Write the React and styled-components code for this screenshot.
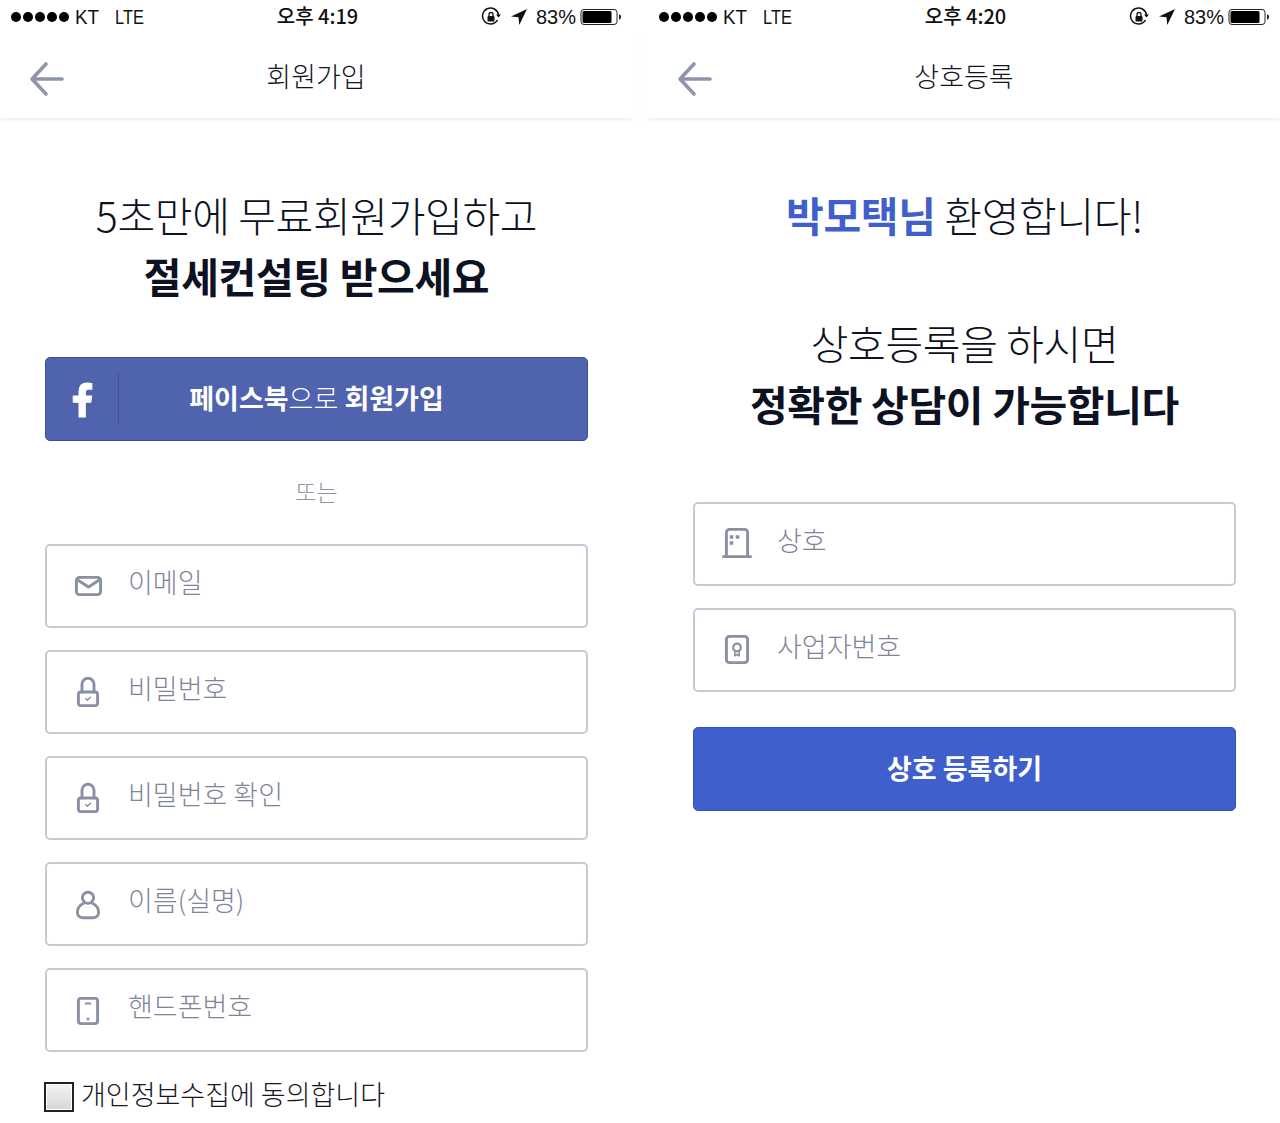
import React from "react";
import styled, { createGlobalStyle } from "styled-components";

const KR = `"Noto Sans CJK KR", "Noto Sans", sans-serif`;

const Global = createGlobalStyle`
  html, body {
    margin: 0;
    padding: 0;
    background: #fff;
    font-family: ${KR};
  }
`;

const Page = styled.div`
  width: 1280px;
  height: 1123px;
  display: flex;
  gap: 16px;
  overflow: hidden;
  background: #fff;
`;

const Phone = styled.section`
  width: 632px;
  display: flex;
  flex-direction: column;
`;

const StatusBar = styled.div`
  height: 36px;
  display: grid;
  grid-template-columns: 1fr auto 1fr;
  align-items: center;
  padding: 0 10px 2px 11px;
  box-sizing: border-box;
  color: #111;
  font-family: "Liberation Sans", ${KR};
  font-size: 20px;
`;

const StatusLeft = styled.div`
  display: flex;
  align-items: center;
`;

const Dots = styled.div`
  display: flex;
  gap: 1.6px;
  margin-right: 6px;
`;

const Dot = styled.i`
  width: 10.4px;
  height: 10.4px;
  border-radius: 50%;
  background: #000;
`;

const Carrier = styled.span`
  margin-right: 14px;
  transform: scaleX(${(p) => (p.$narrow ? 0.82 : 0.94)});
  transform-origin: left center;
`;

const Clock = styled.div`
  font-family: ${KR};
  font-size: 20px;
  font-weight: 500;
  transform: translate(1px, -2px);
`;

const StatusRight = styled.div`
  display: flex;
  align-items: center;
  justify-content: flex-end;
  gap: 6px;
`;

const LockRotation = styled.svg`
  margin-right: 2px;
`;

const LocationIcon = styled.svg`
  margin-left: 1px;
`;

const Percent = styled.span`
  margin-left: 2px;
`;

const Battery = styled.svg`
  margin-left: -2px;
`;

const NavBar = styled.header`
  height: 82px;
  display: flex;
  align-items: center;
  justify-content: center;
  position: relative;
  box-shadow: 0 3px 3px -1px rgba(120, 125, 140, 0.14);
  box-sizing: border-box;
  padding-bottom: 2px;
`;

const BackIcon = styled.svg`
  position: absolute;
  left: 29px;
  top: 25px;
`;

const NavTitle = styled.h1`
  margin: 0;
  font-size: 27px;
  font-weight: 300;
  color: #14161f;
  transform: translateY(-1px);
`;

const Body = styled.div`
  padding: 66px 44px 0 45px;
  display: flex;
  flex-direction: column;
`;

const Headline = styled.h2`
  margin: 0 0 ${(p) => p.$after || 0}px;
  font-size: 41px;
  line-height: 61px;
  font-weight: 300;
  color: #0d1122;
  text-align: center;
  letter-spacing: -0.35px;
`;

const Strong = styled.strong`
  display: block;
  font-weight: 700;
`;

const Accent = styled.span`
  font-weight: 700;
  color: #3f5fcd;
`;

const SolidButton = styled.div`
  height: 84px;
  box-sizing: border-box;
  border-radius: 5px;
  background: ${(p) => p.$bg};
  border: 1px solid ${(p) => p.$edge};
  color: #fff;
  display: flex;
  align-items: center;
  justify-content: center;
  font-size: 27px;
  font-weight: 700;
  position: relative;
  padding-bottom: 4px;
  margin-top: ${(p) => p.$top || 0}px;
`;

const Light = styled.span`
  font-weight: 300;
`;

const FbMark = styled.svg`
  position: absolute;
  left: 24px;
  top: 24px;
`;

const FbDivider = styled.span`
  position: absolute;
  left: 72px;
  top: 15px;
  bottom: 15px;
  width: 1px;
  background: #43568f;
`;

const Or = styled.div`
  height: 103px;
  display: flex;
  align-items: center;
  justify-content: center;
  font-size: 23px;
  font-weight: 300;
  color: #8e94a5;
  padding-bottom: 4px;
  box-sizing: border-box;
`;

const Fields = styled.div`
  display: flex;
  flex-direction: column;
  gap: 22px;
`;

const Field = styled.div`
  height: 84px;
  box-sizing: border-box;
  border: 2px solid #c6c9d3;
  border-radius: 5px;
  display: flex;
  align-items: flex-start;
  background: #fff;
`;

const FieldIcon = styled.svg`
  margin: 24px 0 0 26px;
  flex: none;
`;

const Placeholder = styled.span`
  margin: 16px 0 0 24px;
  font-size: 27px;
  line-height: 40px;
  font-weight: 300;
  color: #7f8598;
`;

const Agree = styled.label`
  display: flex;
  align-items: flex-start;
  margin-top: 24px;
  margin-left: -1px;
  font-size: 27px;
  font-weight: 300;
  color: #17181f;
  line-height: 36px;
`;

const Box = styled.span`
  width: 26px;
  height: 26px;
  border: 2px solid #222;
  box-shadow: inset 0 0 0 1px #fff;
  background: linear-gradient(#f4f4f4, #d6d6d6);
  margin: 6px 7px 0 0;
  flex: none;
`;

const Stroke = ({ children, width = 31 }) => (
  <FieldIcon
    width={width}
    height="34"
    viewBox={`0 0 ${width} 34`}
    fill="none"
    stroke="#8a90a3"
    strokeWidth="2.9"
    strokeLinecap="round"
    strokeLinejoin="round"
  >
    {children}
  </FieldIcon>
);

const MailIcon = () => (
  <Stroke>
    <rect x="3.400" y="7.400" width="24.200" height="17.200" rx="3" />
    <path d="M5.500 10.500l10 6.500 10-6.500" />
  </Stroke>
);

const LockIcon = () => (
  <Stroke>
    <path d="M9 16V8.300a6 6 0 0 1 12 0V16" />
    <rect x="5.400" y="16" width="19.200" height="13.600" rx="2.500" />
    <path d="M12.500 22.600l1.900 1.700 3.100-3" strokeWidth="1.400" />
  </Stroke>
);

const PersonIcon = () => (
  <Stroke>
    <circle cx="15" cy="9.800" r="5.600" />
    <path d="M11 15C6.500 17 4.400 21 4.400 24.500c0 3.500 2.600 5.200 5.600 5.200h10c3 0 5.600-1.700 5.600-5.200C25.600 21 23.500 17 19 15" />
  </Stroke>
);

const PhoneIcon = () => (
  <Stroke>
    <rect x="5.400" y="4.400" width="19.200" height="25.200" rx="2.500" />
    <path d="M12.700 9.500h4.600" strokeWidth="1.800" />
    <path d="M15 25h.01" strokeWidth="3" />
  </Stroke>
);

const DoorIcon = () => (
  <Stroke width={32}>
    <path d="M5.400 28.600V4.400a3 3 0 0 1 3-3h15.200a3 3 0 0 1 3 3v24.200" />
    <path d="M2.400 28.600h27.200" />
    <path d="M10.500 9h.01M16.500 9h.01M10.500 15h.01" strokeWidth="3.600" strokeLinecap="square" />
  </Stroke>
);

const CertIcon = () => (
  <Stroke width={32}>
    <rect x="5.400" y="2.400" width="21.200" height="26.200" rx="3" />
    <circle cx="16" cy="13.500" r="3.800" strokeWidth="2.200" />
    <path d="M13.800 17v4.800l2.200-1.300 2.200 1.300V17" strokeWidth="1.600" />
  </Stroke>
);

const Back = () => (
  <BackIcon width="38" height="36" viewBox="0 0 38 36" fill="none" stroke="#8e95a8" strokeWidth="3.600" strokeLinecap="round" strokeLinejoin="round">
    <path d="M33 18H4M17 3L3 18l14 15" />
  </BackIcon>
);

const Status = ({ time }) => (
  <StatusBar>
    <StatusLeft>
      <Dots>
        {[0, 1, 2, 3, 4].map((n) => (
          <Dot key={n} />
        ))}
      </Dots>
      <Carrier>KT</Carrier>
      <Carrier $narrow>LTE</Carrier>
    </StatusLeft>
    <Clock>{time}</Clock>
    <StatusRight>
      <LockRotation width="20" height="20" viewBox="0 0 20 20" fill="none">
        <path d="M16.500 13A8 8 0 1 1 17.500 8" stroke="#111" strokeWidth="1.500" />
        <path d="M15 7.500h5l-2.500 3z" fill="#111" />
        <rect x="6.500" y="9" width="7" height="5.500" rx="1" fill="#111" />
        <path d="M8 9V7.500a2 2 0 0 1 4 0V9" stroke="#111" strokeWidth="1.300" />
      </LockRotation>
      <LocationIcon width="18" height="18" viewBox="0 0 18 18">
        <path d="M17 1L1 8.500l7.500.8.800 7.700z" fill="#111" />
      </LocationIcon>
      <Percent>83%</Percent>
      <Battery width="42" height="18" viewBox="0 0 42 18" fill="none">
        <rect x="1" y="1.500" width="36" height="15" rx="3" stroke="#222" strokeWidth="1" />
        <rect x="2.500" y="3" width="29" height="12" rx="1.500" fill="#000" />
        <path d="M39 6.500c1.500 0 2 1 2 2.500s-.5 2.500-2 2.500z" fill="#222" />
      </Battery>
    </StatusRight>
  </StatusBar>
);

const signupFields = [
  { icon: MailIcon, label: "이메일" },
  { icon: LockIcon, label: "비밀번호" },
  { icon: LockIcon, label: "비밀번호 확인" },
  { icon: PersonIcon, label: "이름(실명)" },
  { icon: PhoneIcon, label: "핸드폰번호" },
];

const companyFields = [
  { icon: DoorIcon, label: "상호" },
  { icon: CertIcon, label: "사업자번호" },
];

const FieldList = ({ items }) => (
  <Fields>
    {items.map(({ icon: Icon, label }) => (
      <Field key={label}>
        <Icon />
        <Placeholder>{label}</Placeholder>
      </Field>
    ))}
  </Fields>
);

export default function App() {
  return (
    <Page>
      <Global />
      <Phone>
        <Status time="오후 4:19" />
        <NavBar>
          <Back />
          <NavTitle>회원가입</NavTitle>
        </NavBar>
        <Body>
          <Headline $after={51}>
            5초만에 무료회원가입하고
            <Strong>절세컨설팅 받으세요</Strong>
          </Headline>
          <SolidButton $bg="#5063ae" $edge="#3d4f94">
            <FbMark width="24" height="36" viewBox="0 0 22 33">
              <path
                fill="#fff"
                stroke="#fff"
                strokeWidth="1"
                d="M14 32V18.500h5l.8-5.700H14V9.300c0-1.700.5-2.800 2.900-2.800H20V1.300C19.400 1.200 17.700 1 15.700 1 11.300 1 8.300 3.700 8.300 8.600v4.200H3v5.700h5.300V32z"
              />
            </FbMark>
            <FbDivider />
            <span>
              페이스북<Light>으로</Light> 회원가입
            </span>
          </SolidButton>
          <Or>또는</Or>
          <FieldList items={signupFields} />
          <Agree>
            <Box />
            개인정보수집에 동의합니다
          </Agree>
        </Body>
      </Phone>
      <Phone>
        <Status time="오후 4:20" />
        <NavBar>
          <Back />
          <NavTitle>상호등록</NavTitle>
        </NavBar>
        <Body>
          <Headline $after={67}>
            <Accent>박모택님</Accent> 환영합니다!
          </Headline>
          <Headline $after={68}>
            상호등록을 하시면
            <Strong>정확한 상담이 가능합니다</Strong>
          </Headline>
          <FieldList items={companyFields} />
          <SolidButton $bg="#3f5fcd" $edge="#3353b8" $top={35}>
            상호 등록하기
          </SolidButton>
        </Body>
      </Phone>
    </Page>
  );
}
